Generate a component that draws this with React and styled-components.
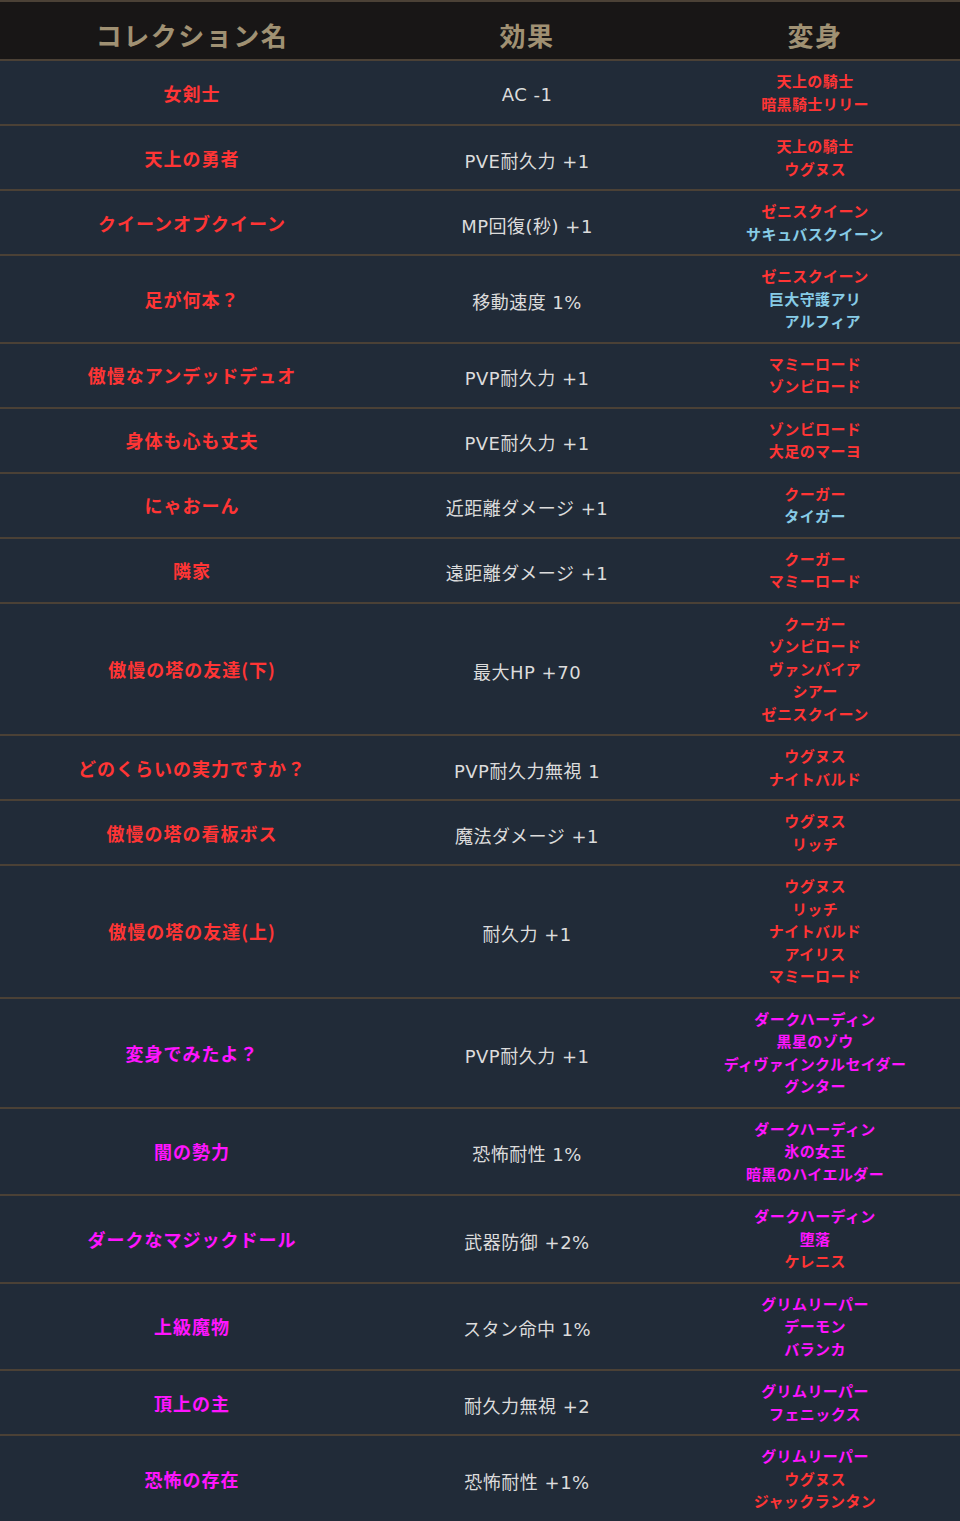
import React from "react";
import styled, { createGlobalStyle } from "styled-components";

const RED = "#ff3535";
const BLUE = "#87cbe6";
const MAGENTA = "#ff14ff";
const LINE = "#4b4136";

const GlobalStyle = createGlobalStyle`
  body {
    margin: 0;
    background: #212b38;
    font-family: "Noto Sans CJK JP", "Noto Sans", sans-serif;
  }
`;

const Table = styled.table`
  width: 960px;
  border-collapse: collapse;
  table-layout: fixed;
  background: #212b38;
`;

const HeadRow = styled.tr`
  background: #181616;
  border-top: 2px solid ${LINE};
  border-bottom: 2px solid ${LINE};
`;

const HeadCell = styled.th`
  width: ${({ width }) => width};
  height: 49px;
  padding: 8px 0 0;
  font-size: 26px;
  font-weight: bold;
  letter-spacing: 1.5px;
  color: #a09173;
  text-align: center;
  line-height: 1;
`;

const Row = styled.tr`
  border-bottom: 2px solid ${LINE};
`;

const Cell = styled.td`
  padding: 9px 0;
  text-align: center;
  vertical-align: middle;
`;

const NameCell = styled(Cell)`
  font-size: 18px;
  font-weight: bold;
  letter-spacing: 1px;
  color: ${({ color }) => color};
`;

const EffectCell = styled(Cell)`
  padding: 11px 0 7px;
  font-family: "DejaVu Sans", "Noto Sans CJK JP", sans-serif;
  font-size: 18px;
  letter-spacing: 0.5px;
  color: #dcdcdc;
`;

const FormLine = styled.div`
  font-size: 15px;
  font-weight: bold;
  line-height: 22.5px;
  letter-spacing: 0.4px;
  white-space: pre;
  color: ${({ color }) => color};
`;

const r = (t) => [t, RED];
const b = (t) => [t, BLUE];
const m = (t) => [t, MAGENTA];

const rows = [
  ["女剣士", RED, "AC -1", [r("天上の騎士"), r("暗黒騎士リリー")]],
  ["天上の勇者", RED, "PVE耐久力 +1", [r("天上の騎士"), r("ウグヌス")]],
  ["クイーンオブクイーン", RED, "MP回復(秒) +1", [r("ゼニスクイーン"), b("サキュバスクイーン")]],
  ["足が何本？", RED, "移動速度 1%", [r("ゼニスクイーン"), b("巨大守護アリ"), b("　アルフィア")]],
  ["傲慢なアンデッドデュオ", RED, "PVP耐久力 +1", [r("マミーロード"), r("ゾンビロード")]],
  ["身体も心も丈夫", RED, "PVE耐久力 +1", [r("ゾンビロード"), r("大足のマーヨ")]],
  ["にゃおーん", RED, "近距離ダメージ +1", [r("クーガー"), b("タイガー")]],
  ["隣家", RED, "遠距離ダメージ +1", [r("クーガー"), r("マミーロード")]],
  [
    "傲慢の塔の友達(下)",
    RED,
    "最大HP +70",
    [r("クーガー"), r("ゾンビロード"), r("ヴァンパイア"), r("シアー"), r("ゼニスクイーン")],
  ],
  ["どのくらいの実力ですか？", RED, "PVP耐久力無視 1", [r("ウグヌス"), r("ナイトバルド")]],
  ["傲慢の塔の看板ボス", RED, "魔法ダメージ +1", [r("ウグヌス"), r("リッチ")]],
  [
    "傲慢の塔の友達(上)",
    RED,
    "耐久力 +1",
    [r("ウグヌス"), r("リッチ"), r("ナイトバルド"), r("アイリス"), r("マミーロード")],
  ],
  [
    "変身でみたよ？",
    MAGENTA,
    "PVP耐久力 +1",
    [m("ダークハーディン"), m("黒星のゾウ"), m("ディヴァインクルセイダー"), m("グンター")],
  ],
  ["闇の勢力", MAGENTA, "恐怖耐性 1%", [m("ダークハーディン"), m("氷の女王"), m("暗黒のハイエルダー")]],
  ["ダークなマジックドール", MAGENTA, "武器防御 +2%", [m("ダークハーディン"), m("堕落"), r("ケレニス")]],
  ["上級魔物", MAGENTA, "スタン命中 1%", [m("グリムリーパー"), m("デーモン"), m("バランカ")]],
  ["頂上の主", MAGENTA, "耐久力無視 +2", [m("グリムリーパー"), m("フェニックス")]],
  ["恐怖の存在", MAGENTA, "恐怖耐性 +1%", [m("グリムリーパー"), r("ウグヌス"), r("ジャックランタン")]],
];

export default function App() {
  return (
    <>
      <GlobalStyle />
      <Table>
        <thead>
          <HeadRow>
            <HeadCell width="40%">コレクション名</HeadCell>
            <HeadCell width="29.8%">効果</HeadCell>
            <HeadCell>変身</HeadCell>
          </HeadRow>
        </thead>
        <tbody>
          {rows.map(([name, color, effect, forms]) => (
            <Row key={name}>
              <NameCell color={color}>{name}</NameCell>
              <EffectCell>{effect}</EffectCell>
              <Cell>
                {forms.map(([text, c], i) => (
                  <FormLine key={i} color={c}>
                    {text}
                  </FormLine>
                ))}
              </Cell>
            </Row>
          ))}
        </tbody>
      </Table>
    </>
  );
}
